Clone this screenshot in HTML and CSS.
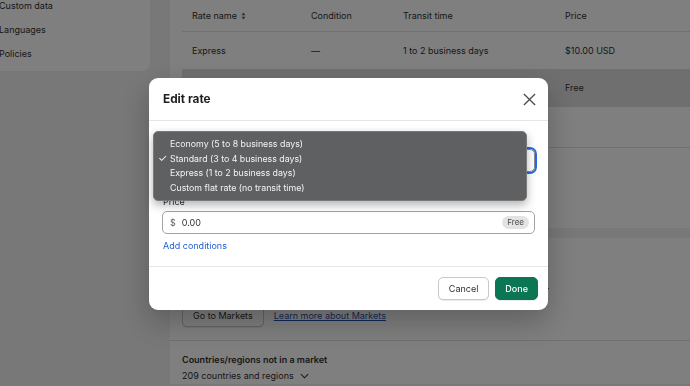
FILE: index.html
```html
<!DOCTYPE html>
<html lang="en">
<head>
<meta charset="utf-8">
<title>Edit rate</title>
<link rel="stylesheet" href="styles.css">
</head>
<body>
<div class="page">
  <aside class="sidebar">
    <div class="nav-item">Custom data</div>
    <div class="nav-item">Languages</div>
    <div class="nav-item">Policies</div>
  </aside>
  <main class="main">
    <section class="card rates-card">
      <div class="table">
        <div class="tr th">
          <div class="c1">Rate name <svg class="sort" viewBox="0 0 6 10" width="5" height="8"><path d="M3 0.5 L5.5 4 H0.5 Z M3 9.5 L5.5 6 H0.5 Z" fill="#616161"/></svg></div>
          <div class="c2">Condition</div>
          <div class="c3">Transit time</div>
          <div class="c4">Price</div>
        </div>
        <div class="tr">
          <div class="c1">Express</div>
          <div class="c2">—</div>
          <div class="c3">1 to 2 business days</div>
          <div class="c4">$10.00 USD</div>
        </div>
        <div class="tr hover">
          <div class="c1"></div>
          <div class="c2"></div>
          <div class="c3"></div>
          <div class="c4">Free</div>
        </div>
      </div>
      <div class="card-section add-rate"></div>
      <div class="card-section zone-extra"></div>
    </section>
    <section class="card markets-card">
      <div class="card-section markets-top">
        <div class="card-title"></div>
        <p class="card-text">Manage your international shipping from Markets instead of managing shipping zones.</p>
        <div class="actions">
          <button class="btn">Go to Markets</button>
          <a class="ext-link" href="#">Learn more about Markets</a>
        </div>
      </div>
      <div class="card-section markets-bottom">
        <div class="strong">Countries/regions not in a market</div>
        <div class="subdued">209 countries and regions <svg class="chev" viewBox="0 0 10 6" width="9" height="6"><path d="M1 1 L5 5 L9 1" fill="none" stroke="#303030" stroke-width="1.2"/></svg></div>
      </div>
    </section>
  </main>
</div>

<div class="backdrop">
  <div class="modal">
    <div class="modal-header">
      <h2 class="modal-title">Edit rate</h2>
      <svg class="close" viewBox="0 0 14 14" width="13" height="13"><path d="M1 1 L13 13 M13 1 L1 13" stroke="#4a4a4a" stroke-width="1.4" fill="none"/></svg>
    </div>
    <div class="modal-body">
      <div class="label"></div>
      <div class="select"></div>
      <div class="label price-label">Price</div>
      <div class="input">
        <span class="prefix">$</span>
        <span class="value">0.00</span>
        <span class="badge">Free</span>
      </div>
      <a class="link" href="#">Add conditions</a>
    </div>
    <div class="modal-footer">
      <button class="btn">Cancel</button>
      <button class="btn primary">Done</button>
    </div>
    <ul class="menu">
      <li>Economy (5 to 8 business days)</li>
      <li class="checked">Standard (3 to 4 business days)</li>
      <li>Express (1 to 2 business days)</li>
      <li>Custom flat rate (no transit time)</li>
    </ul>
  </div>
</div>
</body>
</html>
```
FILE: styles.css
```css
* { box-sizing: border-box; }
html, body { margin: 0; padding: 0; }
body {
  background: #f1f1f1;
  font-family: Inter, "Noto Sans", sans-serif;
  font-size: 9px;
  color: #303030;
  width: 690px;
  height: 386px;
  overflow: hidden;
}

.page {
  display: flex;
  align-items: flex-start;
  gap: 20px;
  margin-left: -12px;
  margin-right: -30px;
}

.sidebar {
  width: 162px;
  flex: none;
  background: #fff;
  border-radius: 0 0 8px 8px;
  margin-top: -6px;
  padding: 0 0 5px 11px;
}
.nav-item { height: 24px; line-height: 24px; }

.main { flex: 1; display: flex; flex-direction: column; gap: 10px; }

.card { background: #fff; border-radius: 0 0 8px 8px; }
.rates-card { margin-top: -12px; padding-top: 12px; border-radius: 0 0 8px 0; }
.markets-card { border-radius: 8px 0 0 0; }

.table { padding: 0 0 0 12px; }
.tr { display: flex; align-items: center; border-bottom: 1px solid #e1e1e1; height: 38px; }
.tr.th { height: 32px; }
.tr.hover { background: #dfdfdf; border-bottom: none; height: 37px; padding-bottom: 2px; }
.tr > div { padding-left: 10px; white-space: nowrap; }
.c1 { width: 119px; }
.c2 { width: 92px; }
.c3 { width: 162px; }
.c4 { flex: 1; }
.sort { margin-left: 2px; vertical-align: -1px; }

.card-section { padding: 0 12px; }
.add-rate { height: 41px; border-bottom: 1px solid #e1e1e1; }
.zone-extra { height: 80px; }

.markets-top { padding: 14px 12px 13px; border-bottom: 1px solid #e1e1e1; }
.card-title { height: 16px; }
.card-text { margin: 10px 0 0; line-height: 16px; white-space: nowrap; }
.actions { margin-top: 10px; display: flex; align-items: center; gap: 10px; }
.ext-link { color: #1f4fb0; text-decoration: underline; }
.markets-bottom { padding: 11px 12px 0; }
.strong { font-weight: 600; line-height: 16px; }
.subdued { line-height: 16px; }
.chev { margin-left: 4px; vertical-align: 0; }

.btn {
  font-family: inherit;
  font-size: 9px;
  color: #303030;
  background: #fff;
  border: 1px solid #c9c9c9;
  border-radius: 5px;
  height: 23px;
  padding: 0 10px;
  box-shadow: 0 1px 0 rgba(0,0,0,0.08);
}
.btn.primary { background: #0b7653; border-color: #0b7653; color: #fff; font-weight: 500; padding: 0 9px; }

.backdrop {
  position: fixed;
  inset: 0;
  background: rgba(0, 0, 0, 0.5);
  padding: 78px 0 0 149px;
}
.modal {
  position: relative;
  width: 399px;
  background: #fff;
  border-radius: 9px;
  box-shadow: 0 12px 30px rgba(0,0,0,0.25);
}
.modal-header {
  height: 43px;
  display: flex;
  align-items: center;
  justify-content: space-between;
  padding: 0 12px 0 14px;
  border-bottom: 1px solid #e6e6e6;
}
.modal-title { margin: 0; font-size: 11.8px; font-weight: 700; color: #1f1f1f; }

.modal-body { padding: 9px 13px 13px 13px; }
.label { line-height: 14px; height: 14px; padding-left: 1px; }
.select {
  margin-top: 5px;
  height: 23px;
  border: 1px solid #8a8a8a;
  border-radius: 5px;
  outline: 2px solid #2a6ae0;
  outline-offset: 0;
}
.price-label { margin-top: 23px; }
.input {
  margin-top: 2px;
  height: 23px;
  border: 1px solid #a3a3a3;
  border-radius: 5px;
  display: flex;
  align-items: center;
  padding: 0 5px 0 7px;
}
.prefix { color: #616161; }
.value { margin-left: 6px; flex: 1; }
.badge {
  background: #e3e3e3;
  color: #4a4a4a;
  font-size: 8px;
  border-radius: 7px;
  padding: 1px 5px;
  line-height: 11px;
}
.link { display: block; margin-top: 5px; line-height: 14px; color: #2160cf; text-decoration: none; padding-left: 1px; }

.modal-footer {
  height: 44px;
  border-top: 1px solid #e6e6e6;
  display: flex;
  align-items: center;
  justify-content: flex-end;
  gap: 6px;
  padding-right: 10px;
}

.menu {
  position: absolute;
  left: 4px;
  top: 53px;
  width: 374px;
  margin: 0;
  padding: 5px 0 4px;
  list-style: none;
  background: #5f6062;
  border: 1px solid #7a7a7a;
  border-radius: 5px;
  box-shadow: 0 4px 10px rgba(0,0,0,0.3);
  color: #f4f4f4;
  font-size: 8.8px;
}
.menu li { line-height: 14.7px; padding-left: 16px; position: relative; }
.menu li.checked::before {
  content: "✓";
  position: absolute;
  left: 4px;
  top: 0;
  font-size: 10.5px;
}
```
